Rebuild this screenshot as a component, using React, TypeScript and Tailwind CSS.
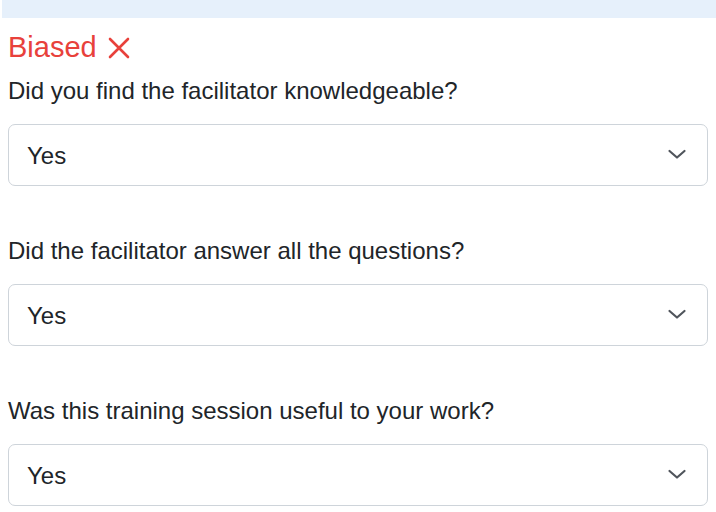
import React from "react";

const questions = [
  "Did you find the facilitator knowledgeable?",
  "Did the facilitator answer all the questions?",
  "Was this training session useful to your work?",
];

function Chevron() {
  return (
    <svg className="-mt-[2px]" width="20" height="11" viewBox="0 0 20 11" fill="none">
      <path d="M2.5 2 L10 8.5 L17.5 2" stroke="#50555c" strokeWidth="2.2" strokeLinecap="round" strokeLinejoin="round" />
    </svg>
  );
}

export default function App() {
  return (
    <div
      className="w-[716px] h-[512px] overflow-hidden bg-white text-[#212529]"
      style={{ fontFamily: '"Liberation Sans", Arial, sans-serif' }}
    >
      <div className="ml-[2px] h-[18px] bg-[#e6f0fb]" />
      <div className="px-[8px]">
        <div className="mt-[12px] flex items-center text-[29px] leading-[35px] text-[#e8413b]">
          <span>Biased</span>
          <svg className="ml-[11px]" width="22" height="22" viewBox="0 0 22 22" fill="none">
            <path d="M2 2 L20 20 M20 2 L2 20" stroke="#e8413b" strokeWidth="2.6" strokeLinecap="round" />
          </svg>
        </div>
        <div className="mt-[11px] flex flex-col gap-[50px]">
          {questions.map((q) => (
            <div key={q} className="flex flex-col">
              <div className="text-[24px] leading-[29px]">{q}</div>
              <div className="mt-[19px] flex h-[62px] items-center justify-between rounded-[7px] border border-[#ced4da] bg-white pl-[18px] pr-[20px]">
                <span className="text-[24px] leading-[29px]">Yes</span>
                <Chevron />
              </div>
            </div>
          ))}
        </div>
      </div>
    </div>
  );
}
